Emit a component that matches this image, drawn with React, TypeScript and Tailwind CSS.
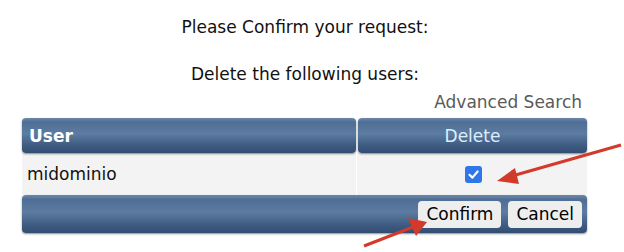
export default function App() {
  const bar =
    "bg-[linear-gradient(to_bottom,#6d88ab_0%,#4f6e95_12%,#5c7ca2_45%,#3d5a80_80%,#324d72_100%)] shadow-[0_1px_2px_rgba(0,0,0,0.45)]"

  return (
    <div className="relative w-[624px] h-[252px] bg-white overflow-hidden font-['DejaVu_Sans',Verdana,sans-serif] text-[17px] leading-[20px] text-[#111]">
      <div className="flex flex-col items-center pt-[17px] pr-[14px]">
        <p>Please Confirm your request:</p>
        <p className="mt-[27px]">Delete the following users:</p>
      </div>

      <div className="flex justify-end pr-[42px] mt-[8px]">
        <span className="text-[#5a5a5a]">Advanced Search</span>
      </div>

      <div className="ml-[22px] w-[565px] mt-[6px]">
        {/* header */}
        <div className="flex gap-[2px] h-[35px]">
          <div className={`w-[334px] rounded-[4px] flex items-center px-[7px] ${bar}`}>
            <span className="text-white font-bold">User</span>
          </div>
          <div className={`flex-1 rounded-[4px] flex items-center justify-center ${bar}`}>
            <span className="text-[#dceeff]">Delete</span>
          </div>
        </div>

        {/* row */}
        <div className="flex h-[42px] bg-[#f3f3f3]">
          <div className="w-[335px] flex items-center px-[5px] border-r border-white">
            <span>midominio</span>
          </div>
          <div className="flex-1 flex items-center justify-center pl-[2px]">
            <span className="w-[17px] h-[17px] rounded-[3px] bg-[#2f76e8] flex items-center justify-center">
              <svg width="13" height="13" viewBox="0 0 12 12">
                <path d="M2.3 6.3 L5 8.9 L9.8 3.2" fill="none" stroke="white" strokeWidth="2" strokeLinecap="round" strokeLinejoin="round" />
              </svg>
            </span>
          </div>
        </div>

        {/* footer */}
        <div className={`h-[38px] rounded-[4px] flex items-center justify-end gap-[7px] pr-[5px] ${bar}`}>
          <button className="h-[27px] px-[8px] rounded-[4px] bg-[#eeeeee] text-black">Confirm</button>
          <button className="h-[27px] px-[8px] rounded-[4px] bg-[#eeeeee] text-black">Cancel</button>
        </div>
      </div>

      {/* annotation arrows */}
      <svg className="absolute inset-0 pointer-events-none" width="624" height="252">
        <line x1="621" y1="145" x2="512" y2="176" stroke="#d23a2b" strokeWidth="3" />
        <polygon points="497,181 515,168 519,184" fill="#d23a2b" />
        <line x1="364" y1="246" x2="413" y2="227" stroke="#d23a2b" strokeWidth="3" />
        <polygon points="427,222 408,218 416,236" fill="#d23a2b" />
      </svg>
    </div>
  )
}
